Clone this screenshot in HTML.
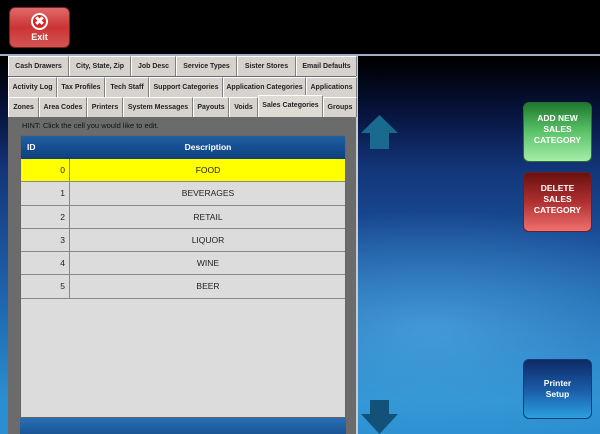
<!DOCTYPE html>
<html><head><style>
*{margin:0;padding:0;box-sizing:border-box}
body{width:600px;height:434px;overflow:hidden;position:relative;font-family:"Liberation Sans",sans-serif;
background:radial-gradient(ellipse 300px 120px at 430px 330px,rgba(90,180,235,.6),rgba(90,180,235,0)),linear-gradient(#000 0px,#000 60px,#06123a 110px,#13367a 170px,#1a4f98 240px,#1f6db5 320px,#2a8fd0 400px,#2a8ed0 434px);}
.top{position:absolute;left:0;top:0;width:600px;height:54px;background:#000;}
.top:after{content:"";position:absolute;left:0;top:54px;width:600px;height:2px;background:#9fb0c8}
.exit{position:absolute;left:9px;top:7px;width:61px;height:41px;border-radius:6px;background:linear-gradient(#e06a6a,#c33 50%,#d45555);color:#fff;font-weight:bold;font-size:9px;text-align:center;border:1px solid #7a2020}
.exit .x{width:17px;height:17px;border-radius:50%;background:#d22;border:2px solid #fff;margin:5px auto 2px;color:#fff;font-size:12px;line-height:13px}
.panel{position:absolute;left:8px;top:56px;width:350px;height:378px;background:#6b6b6b;border-right:2px solid #c8ccd2}
.tab{position:absolute;height:20px;background:#d6d3ce;border:1px solid #fff;border-right-color:#808080;border-bottom:none;font-size:7px;font-weight:bold;color:#222;text-align:center;line-height:20px;white-space:nowrap;overflow:hidden}
.hint{position:absolute;left:22px;top:121px;font-size:7.5px;color:#111}
.tbl{position:absolute;left:20px;top:135px;width:326px;height:283px;background:#dcdcdc;border:1px solid #666}
.hd{height:23px;background:linear-gradient(#1f5fa3,#0e3f7e);color:#fff;font-weight:bold;font-size:8.5px;position:relative}
.row{height:23.3px;border-bottom:1px solid #888;position:relative;font-size:8.5px;color:#222}
.row .id{position:absolute;left:0;width:49px;height:100%;border-right:1px solid #888;text-align:right;padding-right:4px;line-height:23px}
.row .d{position:absolute;left:50px;right:0;text-align:center;line-height:23px}
.blue{position:absolute;left:20px;top:418px;width:326px;height:16px;background:linear-gradient(#2a6fb5,#1a5595)}
.btn{position:absolute;left:523px;width:69px;border-radius:6px;color:#fff;font-weight:bold;font-size:8.5px;text-align:center;line-height:11px}
</style></head><body>
<div class="top"></div>
<div class="exit"><div class="x">✖</div>Exit</div>
<div class="panel"></div>
<div class="tab" style="left:8px;top:56px;width:61px">Cash Drawers</div>
<div class="tab" style="left:69px;top:56px;width:62px">City, State, Zip</div>
<div class="tab" style="left:131px;top:56px;width:45px">Job Desc</div>
<div class="tab" style="left:176px;top:56px;width:61px">Service Types</div>
<div class="tab" style="left:237px;top:56px;width:59px">Sister Stores</div>
<div class="tab" style="left:296px;top:56px;width:61px">Email Defaults</div>
<div class="tab" style="left:8px;top:77px;width:49px">Activity Log</div>
<div class="tab" style="left:57px;top:77px;width:48px">Tax Profiles</div>
<div class="tab" style="left:105px;top:77px;width:44px">Tech Staff</div>
<div class="tab" style="left:149px;top:77px;width:74px">Support Categories</div>
<div class="tab" style="left:223px;top:77px;width:83px">Application Categories</div>
<div class="tab" style="left:306px;top:77px;width:51px">Applications</div>
<div class="tab" style="left:8px;top:97px;width:31px">Zones</div>
<div class="tab" style="left:39px;top:97px;width:48px">Area Codes</div>
<div class="tab" style="left:87px;top:97px;width:36px">Printers</div>
<div class="tab" style="left:123px;top:97px;width:70px">System Messages</div>
<div class="tab" style="left:193px;top:97px;width:36px">Payouts</div>
<div class="tab" style="left:229px;top:97px;width:29px">Voids</div>
<div class="tab" style="left:258px;top:95px;width:65px;height:22px;background:#dedad4">Sales Categories</div>
<div class="tab" style="left:323px;top:97px;width:34px">Groups</div>
<div class="hint">HINT: Click the cell you would like to edit.</div>
<div class="tbl">
<div class="hd"><span style="position:absolute;left:6px;top:6px">ID</span><span style="position:absolute;left:50px;right:0;text-align:center;top:6px">Description</span></div>
<div class="row" style="background:#ffff00"><div class="id">0</div><div class="d">FOOD</div></div>
<div class="row"><div class="id">1</div><div class="d">BEVERAGES</div></div>
<div class="row"><div class="id">2</div><div class="d">RETAIL</div></div>
<div class="row"><div class="id">3</div><div class="d">LIQUOR</div></div>
<div class="row"><div class="id">4</div><div class="d">WINE</div></div>
<div class="row"><div class="id">5</div><div class="d">BEER</div></div>
</div>
<div class="blue"></div>
<svg style="position:absolute;left:361px;top:115px" width="37" height="34"><polygon points="18.5,0 37,18 28,18 28,34 9,34 9,18 0,18" fill="#1a6a90"/></svg>
<svg style="position:absolute;left:361px;top:400px" width="37" height="34"><polygon points="9,0 28,0 28,14 37,14 18.5,34 0,14 9,14" fill="#12527a"/></svg>
<div class="btn" style="top:102px;height:60px;padding-top:10px;background:linear-gradient(#1f7a2f,#5cc36a 50%,#a4eda8);border:1px solid #2d6a35">ADD NEW<br>SALES<br>CATEGORY</div>
<div class="btn" style="top:172px;height:60px;padding-top:10px;background:linear-gradient(#6a1010,#b03030 50%,#f07070);border:1px solid #6a2020">DELETE<br>SALES<br>CATEGORY</div>
<div class="btn" style="top:359px;height:60px;padding-top:18px;background:linear-gradient(#0d2a66,#1a5aa5 50%,#2aa0e0);border:1px solid #123d70">Printer<br>Setup</div>
</body></html>
